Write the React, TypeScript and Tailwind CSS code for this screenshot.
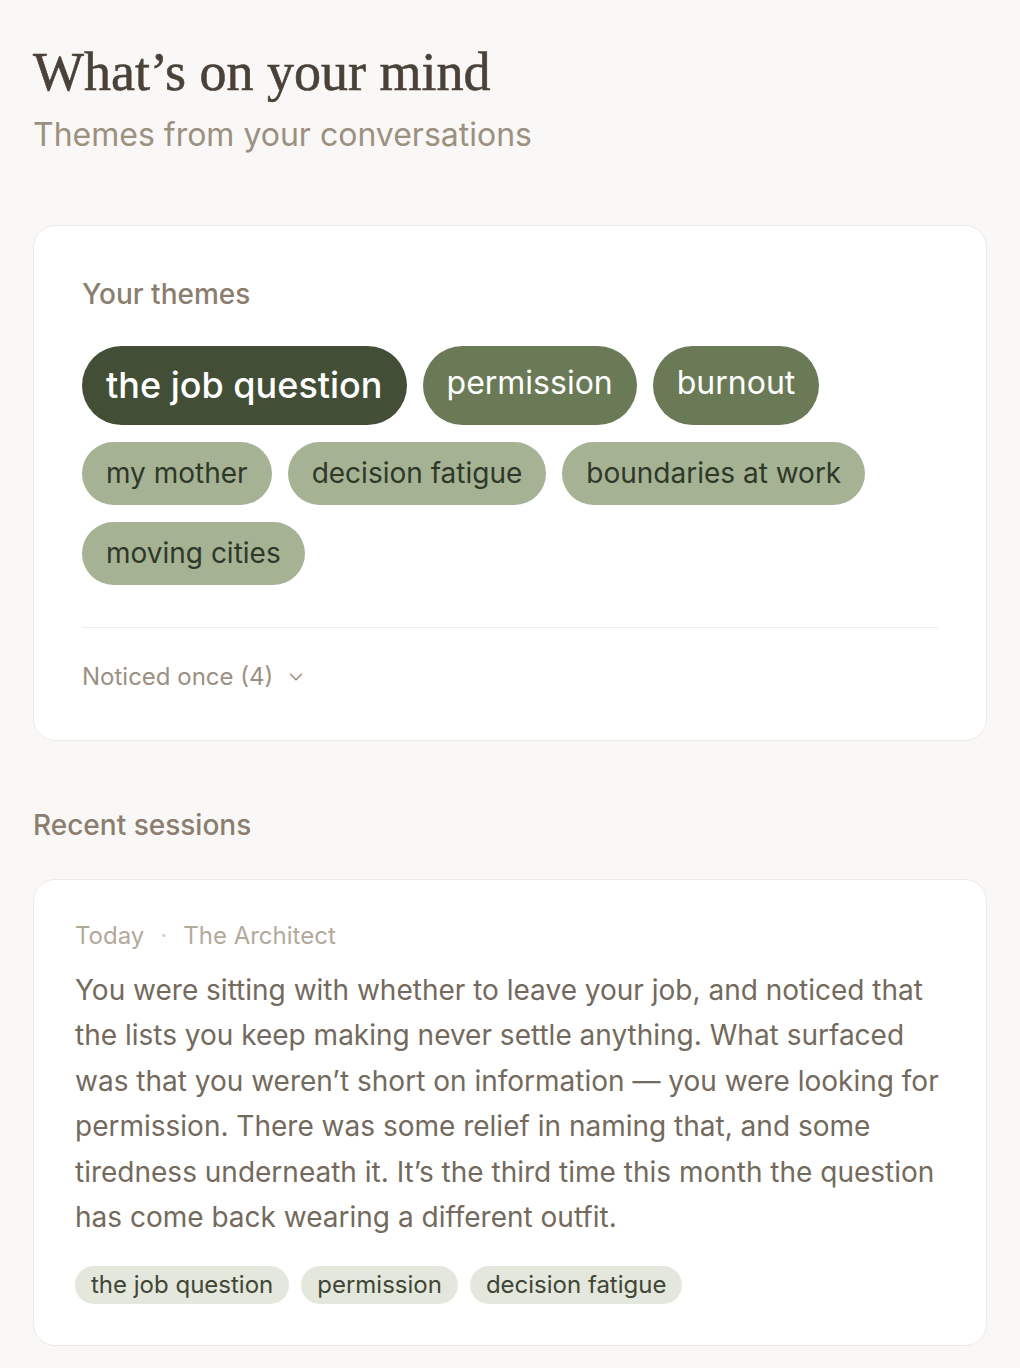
import { ChevronDown } from "lucide-react";

const strong = [
  { label: "the job question", tone: "dark" },
  { label: "permission", tone: "mid" },
  { label: "burnout", tone: "mid" },
];

const light = ["my mother", "decision fatigue", "boundaries at work", "moving cities"];

const sessionTags = ["the job question", "permission", "decision fatigue"];

function ThemeChip({ label, tone }: { label: string; tone: string }) {
  if (tone === "dark") {
    return (
      <span className="rounded-full bg-[#434e37] px-6 py-[14px] text-[36px] leading-[51px] font-medium text-white">
        {label}
      </span>
    );
  }
  return (
    <span className="rounded-full bg-[#6a7a56] px-6 py-[14px] text-[32px] leading-[46px] text-white">
      {label}
    </span>
  );
}

export default function App() {
  return (
    <div
      className="min-h-screen bg-[#f9f8f6] px-[33px] pt-[40px] pb-10"
      style={{ fontFamily: "Inter, 'Noto Sans', sans-serif" }}
    >
      <header>
        <h1
          className="text-[54px] leading-[1.2] text-[#4a4238] [-webkit-text-stroke:0.6px_#4a4238]"
          style={{ fontFamily: "'Liberation Serif', 'DejaVu Serif', serif" }}
        >
          What’s on your mind
        </h1>
        <p className="mt-[6px] text-[32px] leading-[48px] text-[#9c9081]">Themes from your conversations</p>
      </header>

      <section className="mt-[66px] rounded-[22px] border border-[#eeebe6] bg-white px-12 pt-12 pb-[45px]">
        <h2 className="text-[28px] leading-[40px] font-medium text-[#8b7e6e]">Your themes</h2>
        <div className="mt-8 flex flex-wrap gap-x-4 gap-y-[17px]">
          {strong.map((c) => (
            <ThemeChip key={c.label} label={c.label} tone={c.tone} />
          ))}
          {light.map((l) => (
            <span
              key={l}
              className="rounded-full bg-[#a5b394] px-6 py-3 text-[28px] leading-[39px] text-[#2f3828]"
            >
              {l}
            </span>
          ))}
        </div>
        <div className="mt-[42px] border-t border-[#efece8]" />
        <button className="mt-[31px] flex items-center gap-3 text-[24px] leading-[36px] text-[#9c9081]">
          Noticed once (4)
          <ChevronDown size={22} strokeWidth={1.75} />
        </button>
      </section>

      <h2 className="mt-[64px] text-[28px] leading-[40px] font-medium text-[#8b7e6e]">Recent sessions</h2>

      <article className="mt-[34px] rounded-[22px] border border-[#eeebe6] bg-white px-[41px] pt-[38px] pb-[41px]">
        <div className="flex items-center text-[24px] leading-[36px] text-[#b3a99b]">
          <span>Today</span>
          <span className="mx-4 text-[#d6cfc5]">·</span>
          <span>The Architect</span>
        </div>
        <p className="mt-[14px] text-[28px] leading-[45.5px] text-[#736a5d]">
          You were sitting with whether to leave your job, and noticed that the lists you keep making never settle
          anything. What surfaced was that you weren’t short on information — you were looking for permission. There
          was some relief in naming that, and some tiredness underneath it. It’s the third time this month the
          question has come back wearing a different outfit.
        </p>
        <div className="mt-[25px] flex flex-wrap gap-3">
          {sessionTags.map((t) => (
            <span key={t} className="rounded-full bg-[#e4e7dc] px-4 py-[3px] text-[24px] leading-[32px] text-[#3f4636]">
              {t}
            </span>
          ))}
        </div>
      </article>
    </div>
  );
}
